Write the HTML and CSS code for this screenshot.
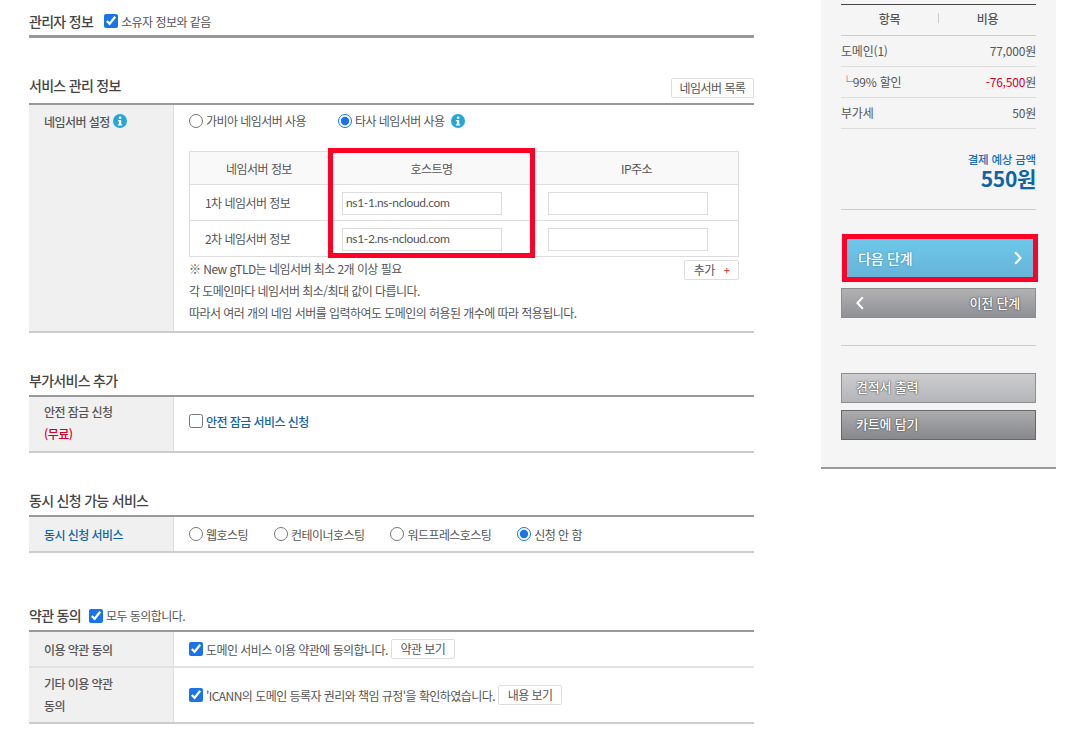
FILE: index.html
```html
<!DOCTYPE html>
<html lang="ko">
<head>
<meta charset="utf-8">
<title>도메인 신청</title>
<link rel="stylesheet" href="styles.css">
</head>
<body>
<div class="page">
  <main class="main">
    <section class="sec sec-admin">
      <div class="head">
        <h2 class="title">관리자 정보</h2>
        <label class="opt"><input type="checkbox" checked>소유자 정보와 같음</label>
      </div>
    </section>

    <section class="sec sec-ns">
      <div class="head head-btn">
        <h2 class="title">서비스 관리 정보</h2>
        <button class="btn btn-list">네임서버 목록</button>
      </div>
      <div class="row row-ns">
        <div class="label"><span>네임서버 설정</span>
          <svg class="info" viewBox="0 0 14 14"><circle cx="7" cy="7" r="7" fill="#23a7d8"/><rect x="5.9" y="2.6" width="2.4" height="2.2" fill="#fff"/><path d="M4.9 6h3.3v4.2h1v1.2H4.9v-1.2h1V7.2h-1z" fill="#fff"/></svg>
        </div>
        <div class="cell">
          <div class="choices choices-ns">
            <label class="opt"><input type="radio" name="ns">가비아 네임서버 사용</label>
            <label class="opt"><input type="radio" name="ns" checked>타사 네임서버 사용</label>
            <svg class="info" viewBox="0 0 14 14"><circle cx="7" cy="7" r="7" fill="#23a7d8"/><rect x="5.9" y="2.6" width="2.4" height="2.2" fill="#fff"/><path d="M4.9 6h3.3v4.2h1v1.2H4.9v-1.2h1V7.2h-1z" fill="#fff"/></svg>
          </div>
          <div class="ns-wrap">
            <table class="ns-table">
              <thead>
                <tr><th class="c1">네임서버 정보</th><th class="c2">호스트명</th><th>IP주소</th></tr>
              </thead>
              <tbody>
                <tr><td class="c1">1차 네임서버 정보</td><td><input class="field" type="text" value="ns1-1.ns-ncloud.com"></td><td><input class="field" type="text"></td></tr>
                <tr><td class="c1">2차 네임서버 정보</td><td><input class="field" type="text" value="ns1-2.ns-ncloud.com"></td><td><input class="field" type="text"></td></tr>
              </tbody>
            </table>
            <div class="mark mark-host"></div>
          </div>
          <div class="notes">
            <div class="note-top">
              <p>※ New gTLD는 네임서버 최소 2개 이상 필요</p>
              <button class="btn btn-add">추가<span class="plus">+</span></button>
            </div>
            <p>각 도메인마다 네임서버 최소/최대 값이 다릅니다.</p>
            <p>따라서 여러 개의 네임 서버를 입력하여도 도메인의 허용된 개수에 따라 적용됩니다.</p>
          </div>
        </div>
      </div>
    </section>

    <section class="sec sec-add">
      <div class="head"><h2 class="title">부가서비스 추가</h2></div>
      <div class="row row-lock">
        <div class="label label-stack"><span>안전 잠금 신청</span><span class="red">(무료)</span></div>
        <div class="cell cell-mid">
          <label class="opt"><input type="checkbox"><b class="blue">안전 잠금 서비스 신청</b></label>
        </div>
      </div>
    </section>

    <section class="sec sec-sim">
      <div class="head"><h2 class="title">동시 신청 가능 서비스</h2></div>
      <div class="row row-sim">
        <div class="label blue">동시 신청 서비스</div>
        <div class="cell cell-mid choices">
          <label class="opt"><input type="radio" name="sim">웹호스팅</label>
          <label class="opt"><input type="radio" name="sim">컨테이너호스팅</label>
          <label class="opt"><input type="radio" name="sim">워드프레스호스팅</label>
          <label class="opt"><input type="radio" name="sim" checked>신청 안 함</label>
        </div>
      </div>
    </section>

    <section class="sec sec-terms">
      <div class="head">
        <h2 class="title">약관 동의</h2>
        <label class="opt"><input type="checkbox" checked>모두 동의합니다.</label>
      </div>
      <div class="row row-t1 row-split">
        <div class="label">이용 약관 동의</div>
        <div class="cell cell-mid">
          <label class="opt"><input type="checkbox" checked>도메인 서비스 이용 약관에 동의합니다.</label>
          <button class="btn btn-view">약관 보기</button>
        </div>
      </div>
      <div class="row row-t2">
        <div class="label label-stack"><span>기타 이용 약관</span><span>동의</span></div>
        <div class="cell cell-mid">
          <label class="opt"><input type="checkbox" checked>'ICANN의 도메인 등록자 권리와 책임 규정'을 확인하였습니다.</label>
          <button class="btn btn-view">내용 보기</button>
        </div>
      </div>
    </section>
  </main>

  <aside class="side">
    <div class="side-head"><span>항목</span><i class="sep"></i><span>비용</span></div>
    <div class="side-row"><span>도메인(1)</span><span>77,000원</span></div>
    <div class="side-row"><span class="sub">└99% 할인</span><span><em class="minus">-76,500</em>원</span></div>
    <div class="side-row"><span>부가세</span><span>50원</span></div>
    <div class="total">
      <div class="total-label">결제 예상 금액</div>
      <div class="total-num">550원</div>
    </div>
    <div class="next-mark">
      <button class="act act-next"><span>다음 단계</span>
        <svg class="chev" viewBox="0 0 8 14"><path d="M1.2 1.2 6.6 7l-5.4 5.8" fill="none" stroke="#fff" stroke-width="2"/></svg>
      </button>
    </div>
    <button class="act act-prev">
      <svg class="chev" viewBox="0 0 8 14"><path d="M6.8 1.2 1.4 7l5.4 5.8" fill="none" stroke="#fff" stroke-width="2"/></svg>
      <span>이전 단계</span>
    </button>
    <hr class="side-hr">
    <button class="act act-quote">견적서 출력</button>
    <button class="act act-cart">카트에 담기</button>
  </aside>
</div>
</body>
</html>
```

FILE: styles.css
```css
* { box-sizing: border-box; }
html, body { margin: 0; padding: 0; background: #fff; }
body {
  height: 745px;
  overflow: hidden;
  font-family: "Noto Sans CJK KR", "Noto Sans", sans-serif;
  font-size: 12px;
  color: #555;
}
p { margin: 0; }
.page { display: flex; align-items: flex-start; padding-left: 29px; }
.main { width: 725px; flex: none; letter-spacing: -0.55px; }
.sec { display: block; }
.head {
  display: flex;
  align-items: center;
  box-sizing: content-box;
  height: 25px;
  padding-bottom: 2px;
  border-bottom: 2px solid #999;
}
.title { margin: 0 10px 2px 0; font-size: 14px; font-weight: 500; color: #444; letter-spacing: -0.7px; line-height: 20px; }
.sec-admin { padding-top: 10px; }
.sec-admin .head { border-bottom-width: 3px; height: 22px; padding-bottom: 3px; }
.sec-admin .title { margin-bottom: 0; margin-right: 11px; }
.sec-ns { margin-top: 31px; }
.head-btn { justify-content: space-between; align-items: flex-end; height: 29px; padding-bottom: 5px; }
.head-btn .title { margin-bottom: 3px; }
.sec-add, .sec-sim { margin-top: 35px; }
.sec-terms { margin-top: 50px; }
.sec-terms .title { margin-right: 8px; margin-bottom: 1px; }
.opt { display: inline-flex; align-items: center; color: #555; }
.opt input { margin: 0 3px 0 0; width: 14px; height: 14px; accent-color: #1a73e8; flex: none; }
.row { display: flex; border-bottom: 2px solid #ccc; }
.row-split { border-bottom: 2px solid #e2e2e2; }
.row-ns { height: 228px; }
.row-lock { height: 56px; }
.row-sim { height: 36px; }
.row-t1 { height: 36px; }
.row-t2 { height: 56px; }
.row-lock .cell { padding-bottom: 6px; }
.row-lock .label { padding-bottom: 2px; }
.label {
  width: 145px;
  flex: none;
  background: #f0f0f0;
  border-right: 1px solid #ddd;
  padding: 0 0 0 15px;
  font-weight: 500;
  color: #555;
  display: flex;
  align-items: center;
}
.row-ns .label { align-items: flex-start; padding-top: 8px; line-height: 18px; }
.row-ns .label .info { margin: 1px 0 0 3px; }
.label-stack { flex-direction: column; align-items: flex-start; justify-content: center; line-height: 22px; }
.blue { color: #0f64a8; font-weight: 500; }
.red { color: #d3002c; }
.info { width: 14px; height: 14px; flex: none; display: block; }
.cell { flex: 1; padding-left: 15px; min-width: 0; }
.cell-mid { display: flex; align-items: center; }
.choices { display: flex; align-items: center; gap: 26px; }
.choices-ns { padding-top: 8px; height: 46px; align-items: flex-start; gap: 32px; }
.choices-ns .opt { line-height: 16px; }
.choices-ns .info { margin: 1px 0 0 -26px; }
.ns-wrap { position: relative; width: 550px; }
.ns-table { width: 550px; border-collapse: collapse; table-layout: fixed; border: 1px solid #ddd; color: #555; }
.ns-table th, .ns-table td { border: 1px solid #ddd; padding: 0; font-weight: 400; }
.ns-table th { height: 33px; background: #f9f9f9; text-align: center; }
.ns-table td { height: 36px; padding-left: 13px; }
.ns-table td.c1 { padding-left: 15px; }
.c1 { width: 139px; }
.c2 { width: 206px; }
.field {
  display: block;
  width: 160px;
  height: 23px;
  margin-top: 1px;
  border: 1px solid #ddd;
  padding: 0 3px 2px;
  font-family: Lato, "Noto Sans", sans-serif;
  font-size: 12px;
  color: #555;
  background: #fff;
  letter-spacing: -0.35px;
  outline: none;
}
.mark { position: absolute; border: 5px solid #ff0027; pointer-events: none; }
.mark-host { left: 139px; top: -3px; width: 207px; height: 110px; }
.notes { width: 550px; line-height: 22px; }
.notes p { height: 22px; }
.note-top { display: flex; justify-content: space-between; align-items: center; padding-top: 3px; height: 23px; }
.note-top p { margin-top: -2px; }
.btn {
  font: inherit;
  letter-spacing: inherit;
  color: #555;
  background: #fff;
  border: 1px solid #ddd;
  border-radius: 2px;
  padding: 0;
  height: 20px;
  line-height: 18px;
}
.btn-list { width: 83px; }
.btn-add { width: 55px; }
.plus { color: #e0202a; margin-left: 9px; font-size: 11px; }
.btn-view { width: 64px; margin-left: 3px; }
.side {
  width: 235px;
  flex: none;
  margin-left: 67px;
  height: 469px;
  background: #f5f5f5;
  border-bottom: 2px solid #999;
  padding: 4px 20px 0;
  display: flex;
  flex-direction: column;
  letter-spacing: -0.2px;
}
.side-head {
  display: grid;
  grid-template-columns: 1fr 1px 1fr;
  align-items: center;
  height: 32px;
  padding-bottom: 4px;
  border-top: 1px solid #444;
  border-bottom: 1px solid #ccc;
  text-align: center;
  font-weight: 500;
  color: #555;
  flex: none;
}
.sep { width: 1px; height: 10px; background: #ccc; display: block; }
.side-row {
  display: flex;
  justify-content: space-between;
  align-items: center;
  height: 31px;
  padding-bottom: 1px;
  border-bottom: 1px solid #ddd;
  color: #555;
  flex: none;
}
.minus { font-style: normal; color: #d3002c; }
.total { text-align: right; padding-top: 22px; height: 81px; border-bottom: 1px solid #ccc; flex: none; }
.total-label { color: #1a6fb5; font-weight: 500; font-size: 11.5px; line-height: 16px; }
.total-num { color: #0f64a8; font-weight: 700; font-size: 21px; line-height: 22px; letter-spacing: -0.3px; }
.act {
  display: flex;
  align-items: center;
  width: 195px;
  height: 30px;
  padding: 0 14px 3px;
  font: inherit;
  font-size: 13px;
  font-weight: 500;
  letter-spacing: -0.2px;
  color: #fff;
  text-shadow: 0 0 2px #444, 0 0 1px #444;
  border: 1px solid #8c8c8c;
  flex: none;
}
.next-mark {
  width: 196px;
  height: 48px;
  margin: 24px 0 6px 1px;
  border: 5px solid #ff0027;
  flex: none;
}
.act-next {
  width: 186px;
  height: 38px;
  border: 0;
  padding: 0 11px;
  justify-content: space-between;
  font-size: 14px;
  background: linear-gradient(#6cc8ea, #67b4d8);
  text-shadow: 0 0 2px rgba(40,110,150,.8);
}
.act-prev { justify-content: space-between; background: linear-gradient(#b2b2b4, #8f9095); padding: 0 15px 1px 14px; }
.chev { width: 8px; height: 14px; flex: none; }
.side-hr { width: 100%; height: 1px; border: 0; background: #ccc; margin: 27px 0; flex: none; }
.act-quote { background: linear-gradient(#cdcdcf, #b4b5b9); border-color: #8f8f8f; margin-bottom: 7px; }
.act-cart { background: linear-gradient(#acacae, #87888c); border-color: #666; }
```
